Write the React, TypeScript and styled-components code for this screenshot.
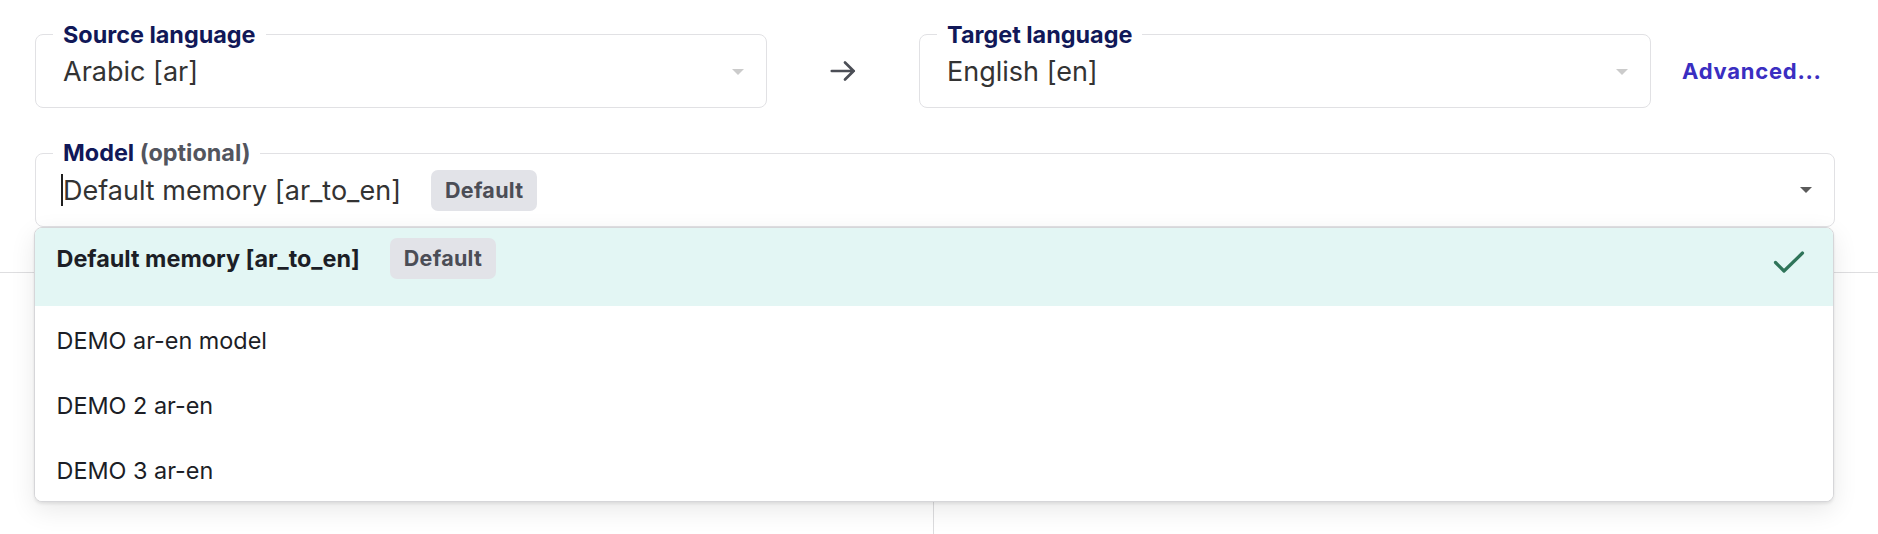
import styled, { createGlobalStyle } from 'styled-components';

const GlobalStyle = createGlobalStyle`
  html, body {
    margin: 0;
    padding: 0;
    background: #ffffff;
    overflow: hidden;
  }

  body {
    font-family: Inter, "Noto Sans", sans-serif;
    -webkit-font-smoothing: antialiased;
  }
`;

interface ModelOption {
  name: string;
  isDefault?: boolean;
}

const models: ModelOption[] = [
  { name: 'Default memory [ar_to_en]', isDefault: true },
  { name: 'DEMO ar-en model' },
  { name: 'DEMO 2 ar-en' },
  { name: 'DEMO 3 ar-en' },
];

const App = () => {
  const selected = models[0];

  return (
    <Page>
      <GlobalStyle />
      <Header>
        <LanguageRow>
          <Field>
            <Legend>Source language</Legend>
            <ValueRow>
              Arabic [ar]
              <Caret $muted />
            </ValueRow>
          </Field>

          <ArrowCell>
            <svg width="26" height="26" viewBox="0 0 26 26" fill="none">
              <path
                d="M1.8 13h22M15 4.5l8.6 8.5-8.6 8.5"
                stroke="#4b4e56"
                strokeWidth="2.7"
                strokeLinecap="round"
                strokeLinejoin="round"
              />
            </svg>
          </ArrowCell>

          <Field>
            <Legend>Target language</Legend>
            <ValueRow>
              English [en]
              <Caret $muted />
            </ValueRow>
          </Field>

          <AdvancedCell>
            <AdvancedLink>Advanced...</AdvancedLink>
          </AdvancedCell>
        </LanguageRow>

        <ModelArea>
          <Field>
            <Legend>
              Model <Muted>(optional)</Muted>
            </Legend>
            <ValueRow>
              <TextCursor />
              {selected.name}
              <Badge>Default</Badge>
              <Caret />
            </ValueRow>
          </Field>

          <Menu>
            {models.map((model) => {
              const isSelected = model.name === selected.name;
              return (
                <Option key={model.name} $selected={isSelected}>
                  {model.name}
                  {model.isDefault && <Badge>Default</Badge>}
                  {isSelected && (
                    <CheckMark width="32" height="22" viewBox="0 0 32 22" fill="none">
                      <path
                        d="M2.5 11.5l8.5 8.5L29.5 2"
                        stroke="#2f7459"
                        strokeWidth="3.2"
                        strokeLinecap="round"
                        strokeLinejoin="round"
                      />
                    </CheckMark>
                  )}
                </Option>
              );
            })}
          </Menu>
        </ModelArea>
      </Header>

      <Panels>
        <Pane $divider />
        <Pane />
      </Panels>
    </Page>
  );
};

const Page = styled.div`
  display: flex;
  flex-direction: column;
  height: 100vh;
`;

const Header = styled.div`
  display: flex;
  flex-direction: column;
  gap: 33px;
  padding: 23px 43px 0 35px;
`;

const LanguageRow = styled.div`
  display: grid;
  grid-template-columns: 1fr 152px 1fr 184px;
  align-items: end;
`;

const Field = styled.fieldset`
  margin: 0;
  min-width: 0;
  padding: 4px 22px 16px 27px;
  border: 1px solid #e1e1e4;
  border-radius: 8px;
  background: #ffffff;
`;

const Legend = styled.legend`
  margin-left: -10px;
  padding: 0 10px;
  font-size: 23.4px;
  font-weight: 700;
  line-height: 1;
  color: #111858;
`;

const Muted = styled.span`
  color: #53555e;
`;

const ValueRow = styled.div`
  display: flex;
  align-items: center;
  box-sizing: border-box;
  height: 41px;
  padding-top: 2px;
  font-size: 27px;
  line-height: 1;
  color: #333333;
  white-space: nowrap;
`;

const Caret = styled.span<{ $muted?: boolean }>`
  margin-left: auto;
  width: 0;
  height: 0;
  border-left: 6px solid transparent;
  border-right: 6px solid transparent;
  border-top: 6px solid ${(p) => (p.$muted ? '#cbcbcb' : '#5b5b5b')};
`;

const TextCursor = styled.span`
  display: inline-block;
  width: 2px;
  height: 32px;
  margin-left: -2px;
  background: #1f1f1f;
`;

const SideCell = styled.div`
  display: flex;
  align-items: center;
  height: 41px;
  margin-bottom: 17px;
`;

const ArrowCell = styled(SideCell)`
  justify-content: center;
`;

const AdvancedCell = styled(SideCell)`
  padding-left: 31px;
`;

const AdvancedLink = styled.a`
  font-size: 22px;
  font-weight: 700;
  letter-spacing: 0.75px;
  color: #3a2ec1;
  cursor: pointer;
  text-decoration: none;
`;

const Badge = styled.span`
  display: inline-flex;
  align-items: center;
  height: 41px;
  margin-left: 30px;
  padding: 0 14px;
  border-radius: 7px;
  background: #e2e3e8;
  color: #4b4d56;
  font-size: 21.5px;
  font-weight: 700;
  line-height: 1;
  letter-spacing: 0.3px;
`;

const ModelArea = styled.div`
  position: relative;
`;

const Menu = styled.ul`
  position: absolute;
  top: 100%;
  left: -1.5px;
  right: 1.5px;
  z-index: 10;
  margin: 0;
  padding: 0;
  list-style: none;
  background: #ffffff;
  border: 1px solid #d6d6d9;
  border-radius: 8px;
  overflow: hidden;
  box-shadow: 0 2px 3px rgba(0, 0, 0, 0.08), 0 8px 26px rgba(0, 0, 0, 0.09);
`;

const Option = styled.li<{ $selected?: boolean }>`
  display: flex;
  align-items: center;
  box-sizing: border-box;
  min-height: ${(p) => (p.$selected ? '78px' : '65px')};
  padding: ${(p) => (p.$selected ? '10px 28px 27px 22px' : '4px 28px 0 22px')};
  background: ${(p) => (p.$selected ? '#e3f6f4' : '#ffffff')};
  color: #1c1e26;
  font-size: 23.4px;
  font-weight: ${(p) => (p.$selected ? 700 : 400)};
  line-height: 1;
  white-space: nowrap;
`;

const CheckMark = styled.svg`
  margin-left: auto;
  margin-top: 7px;
`;

const Panels = styled.div`
  flex: 1;
  display: grid;
  grid-template-columns: 934px 1fr;
  margin-top: 45px;
  border-top: 1px solid #dedee0;
`;

const Pane = styled.div<{ $divider?: boolean }>`
  border-right: ${(p) => (p.$divider ? '1px solid #dcdcde' : 'none')};
`;

export default App;
